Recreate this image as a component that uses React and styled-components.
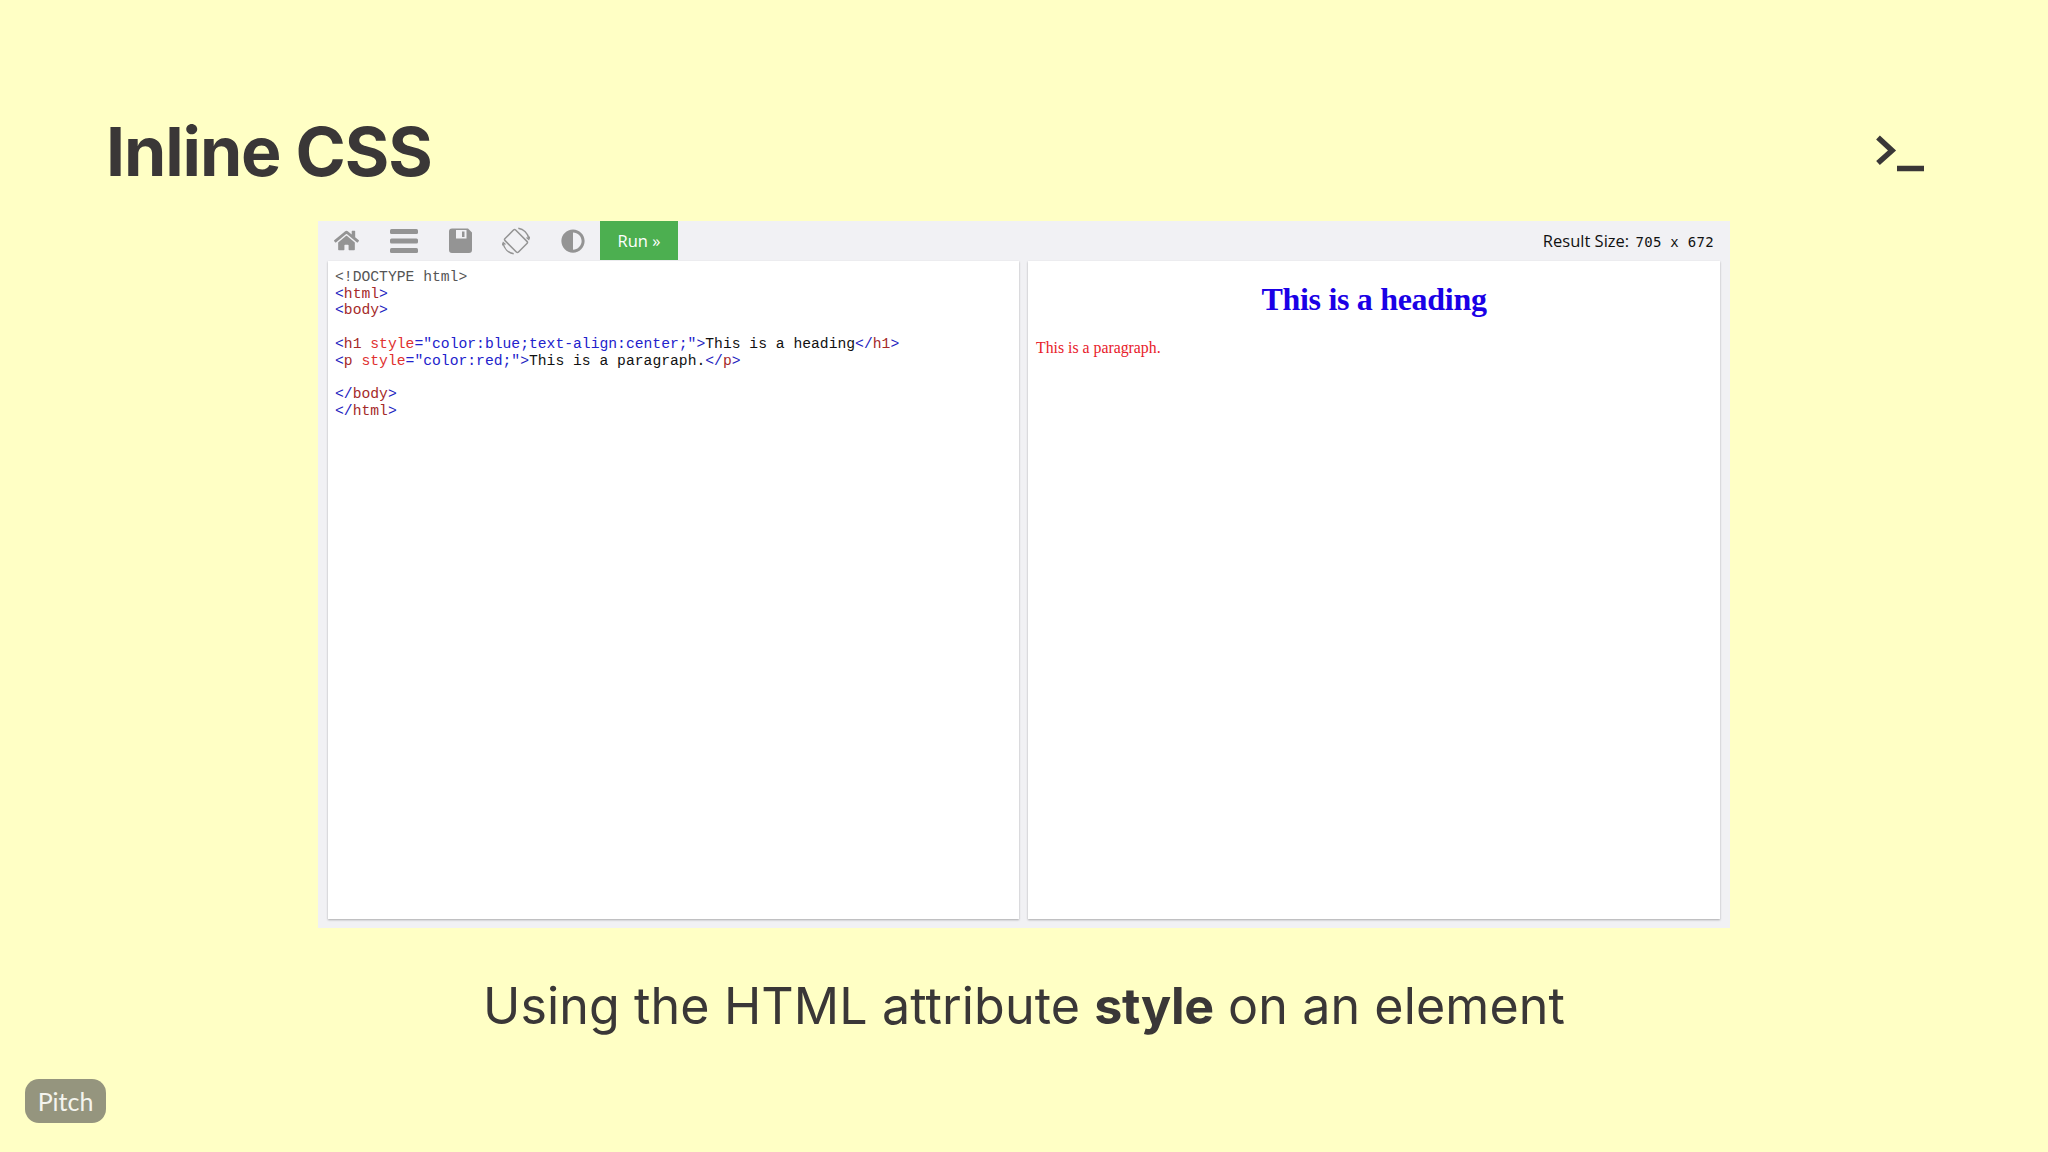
import React from "react";
import styled, { createGlobalStyle } from "styled-components";
import { FaHome, FaAdjust } from "react-icons/fa";

const GlobalStyle = createGlobalStyle`
  html, body {
    margin: 0;
    padding: 0;
    background: #ffffc5;
  }
`;

const Slide = styled.div`
  position: relative;
  width: 2048px;
  height: 1152px;
  overflow: hidden;
  background: #ffffc5;
  color: #3a3737;
  font-family: Inter, "Liberation Sans", sans-serif;
  display: flex;
  flex-direction: column;
`;

const Header = styled.header`
  height: 221px;
  box-sizing: border-box;
  padding: 109px 122px 0 106px;
  display: flex;
  justify-content: space-between;
  align-items: flex-start;
`;

const Title = styled.h1`
  margin: 0;
  font-size: 68px;
  line-height: 84px;
  font-weight: 700;
  letter-spacing: -1.1px;
`;

const Prompt = styled.svg`
  width: 52px;
  height: 40px;
  margin-top: 24px;
`;

const Frame = styled.div`
  width: 1412px;
  height: 707px;
  margin-left: 318px;
  background: #f1f1f4;
  display: flex;
  flex-direction: column;
`;

const Toolbar = styled.div`
  height: 39px;
  flex: none;
  padding-left: 16px;
  padding-right: 16px;
  display: flex;
  align-items: center;
`;

const ToolIcon = styled.div`
  width: ${(p) => p.$w}px;
  flex: none;
  display: flex;
  align-items: center;
  color: #949494;
`;

const RunButton = styled.div`
  width: 78px;
  height: 39px;
  background: #4caf50;
  color: #fff;
  font-size: 16.5px;
  font-family: "Open Sans", "Liberation Sans", sans-serif;
  display: flex;
  align-items: center;
  justify-content: center;
`;

const ResultSize = styled.div`
  margin-left: auto;
  color: #111;
  font-size: 16.5px;
  font-family: "Open Sans", "Liberation Sans", sans-serif;
  white-space: pre;
`;

const Dims = styled.span`
  font-family: "DejaVu Sans Mono", monospace;
  font-size: 14px;
  letter-spacing: 0.3px;
  margin-left: 2px;
`;

const Panels = styled.div`
  display: flex;
  padding: 1px 10px 0;
`;

const Panel = styled.div`
  width: ${(p) => p.$w}px;
  height: 658px;
  margin-right: ${(p) => p.$gap || 0}px;
  box-sizing: border-box;
  background: #fff;
  box-shadow: 0 1px 2px 0 rgba(0, 0, 0, 0.3);
`;

const Code = styled.pre`
  margin: 0;
  padding: 8px 7px;
  font-family: "Liberation Mono", monospace;
  font-size: 14.7px;
  line-height: 16.7px;
  color: #111;
`;

const Tag = styled.span`
  color: #2222c0;
`;

const Name = styled.span`
  color: #a52a2a;
`;

const Attr = styled.span`
  color: #e03030;
`;

const Val = styled.span`
  color: #2222cc;
`;

const Dim = styled.span`
  color: #555;
`;

const ResultHeading = styled.h2`
  margin: 0;
  padding-top: 20px;
  text-align: center;
  font-family: "Liberation Serif", serif;
  font-size: 32px;
  line-height: 37px;
  font-weight: 700;
  letter-spacing: -0.3px;
  color: #1a00e6;
`;

const ResultText = styled.p`
  margin: 21px 0 0;
  padding-left: 8px;
  font-family: "Liberation Serif", serif;
  font-size: 15.8px;
  line-height: 18px;
  color: #e8202a;
`;

const Caption = styled.p`
  margin: 0;
  padding-top: 46px;
  text-align: center;
  font-size: 50.2px;
  line-height: 64px;
  font-weight: 400;
  letter-spacing: 0.1px;
  color: #3a3737;

  b {
    font-weight: 700;
    letter-spacing: -0.4px;
  }
`;

const PitchBadge = styled.div`
  position: absolute;
  left: 25px;
  top: 1079px;
  width: 81px;
  height: 44px;
  border-radius: 14px;
  background: #95957e;
  color: #f4f4ee;
  font-family: Lato, "Liberation Sans", sans-serif;
  font-weight: 400;
  font-size: 25px;
  display: flex;
  align-items: center;
  justify-content: center;
`;

const BarsIcon = () => (
  <svg width="28" height="26" viewBox="0 0 28 26" fill="#949494">
    <rect x="0" y="1" width="28" height="5" rx="1.5" />
    <rect x="0" y="10.5" width="28" height="5" rx="1.5" />
    <rect x="0" y="20" width="28" height="5" rx="1.5" />
  </svg>
);

const SaveIcon = () => (
  <svg width="23" height="25" viewBox="0 0 23 25">
    <path d="M3 0.5H19L23 4.5V22A3 3 0 0 1 20 25H3A3 3 0 0 1 0 22V3.5A3 3 0 0 1 3 0.5Z" fill="#949494" />
    <rect x="7" y="2" width="10.5" height="8.5" fill="#f1f1f4" />
    <rect x="13" y="3.5" width="2.5" height="5.5" fill="#949494" />
  </svg>
);

const RotateIcon = () => (
  <svg width="28" height="28" viewBox="0 0 28 28" fill="none" stroke="#949494">
    <rect x="4.5" y="6.5" width="19" height="15" rx="1.5" strokeWidth="1.5" transform="rotate(45 14 14)" />
    <path d="M16.3 1.2A13 13 0 0 1 26.8 11.7M11.7 26.8A13 13 0 0 1 1.2 16.3" strokeWidth="1.5" />
    <path d="M24.5 10.5L26.8 12.5L28 9.5M3.5 17.5L1.2 15.5L0 18.5" strokeWidth="1.2" />
  </svg>
);

const App = () => (
  <Slide>
    <GlobalStyle />
    <Header>
      <Title>Inline CSS</Title>
      <Prompt viewBox="0 0 52 40" fill="none" stroke="#3a3737" strokeWidth="5.5">
        <path d="M4 4.5 L18 17.5 L4 30" />
        <path d="M23 35.5 H50" />
      </Prompt>
    </Header>
    <Frame>
      <Toolbar>
        <ToolIcon $w={56}><FaHome size={25} /></ToolIcon>
        <ToolIcon $w={59}><BarsIcon /></ToolIcon>
        <ToolIcon $w={53}><SaveIcon /></ToolIcon>
        <ToolIcon $w={59}><RotateIcon /></ToolIcon>
        <ToolIcon $w={39}><FaAdjust size={24} /></ToolIcon>
        <RunButton>Run »</RunButton>
        <ResultSize>Result Size: <Dims>705 x 672</Dims></ResultSize>
      </Toolbar>
      <Panels>
        <Panel $w={691} $gap={9}>
          <Code>
            <Dim>{"<!DOCTYPE html>"}</Dim>{"\n"}
            <Tag>{"<"}</Tag><Name>html</Name><Tag>{">"}</Tag>{"\n"}
            <Tag>{"<"}</Tag><Name>body</Name><Tag>{">"}</Tag>{"\n\n"}
            <Tag>{"<"}</Tag><Name>h1</Name> <Attr>style</Attr><Val>="color:blue;text-align:center;"</Val><Tag>{">"}</Tag>This is a heading<Tag>{"</"}</Tag><Name>h1</Name><Tag>{">"}</Tag>{"\n"}
            <Tag>{"<"}</Tag><Name>p</Name> <Attr>style</Attr><Val>="color:red;"</Val><Tag>{">"}</Tag>This is a paragraph.<Tag>{"</"}</Tag><Name>p</Name><Tag>{">"}</Tag>{"\n\n"}
            <Tag>{"</"}</Tag><Name>body</Name><Tag>{">"}</Tag>{"\n"}
            <Tag>{"</"}</Tag><Name>html</Name><Tag>{">"}</Tag>
          </Code>
        </Panel>
        <Panel $w={692}>
          <ResultHeading>This is a heading</ResultHeading>
          <ResultText>This is a paragraph.</ResultText>
        </Panel>
      </Panels>
    </Frame>
    <Caption>Using the HTML attribute <b>style</b> on an element</Caption>
    <PitchBadge>Pitch</PitchBadge>
  </Slide>
);

export default App;
